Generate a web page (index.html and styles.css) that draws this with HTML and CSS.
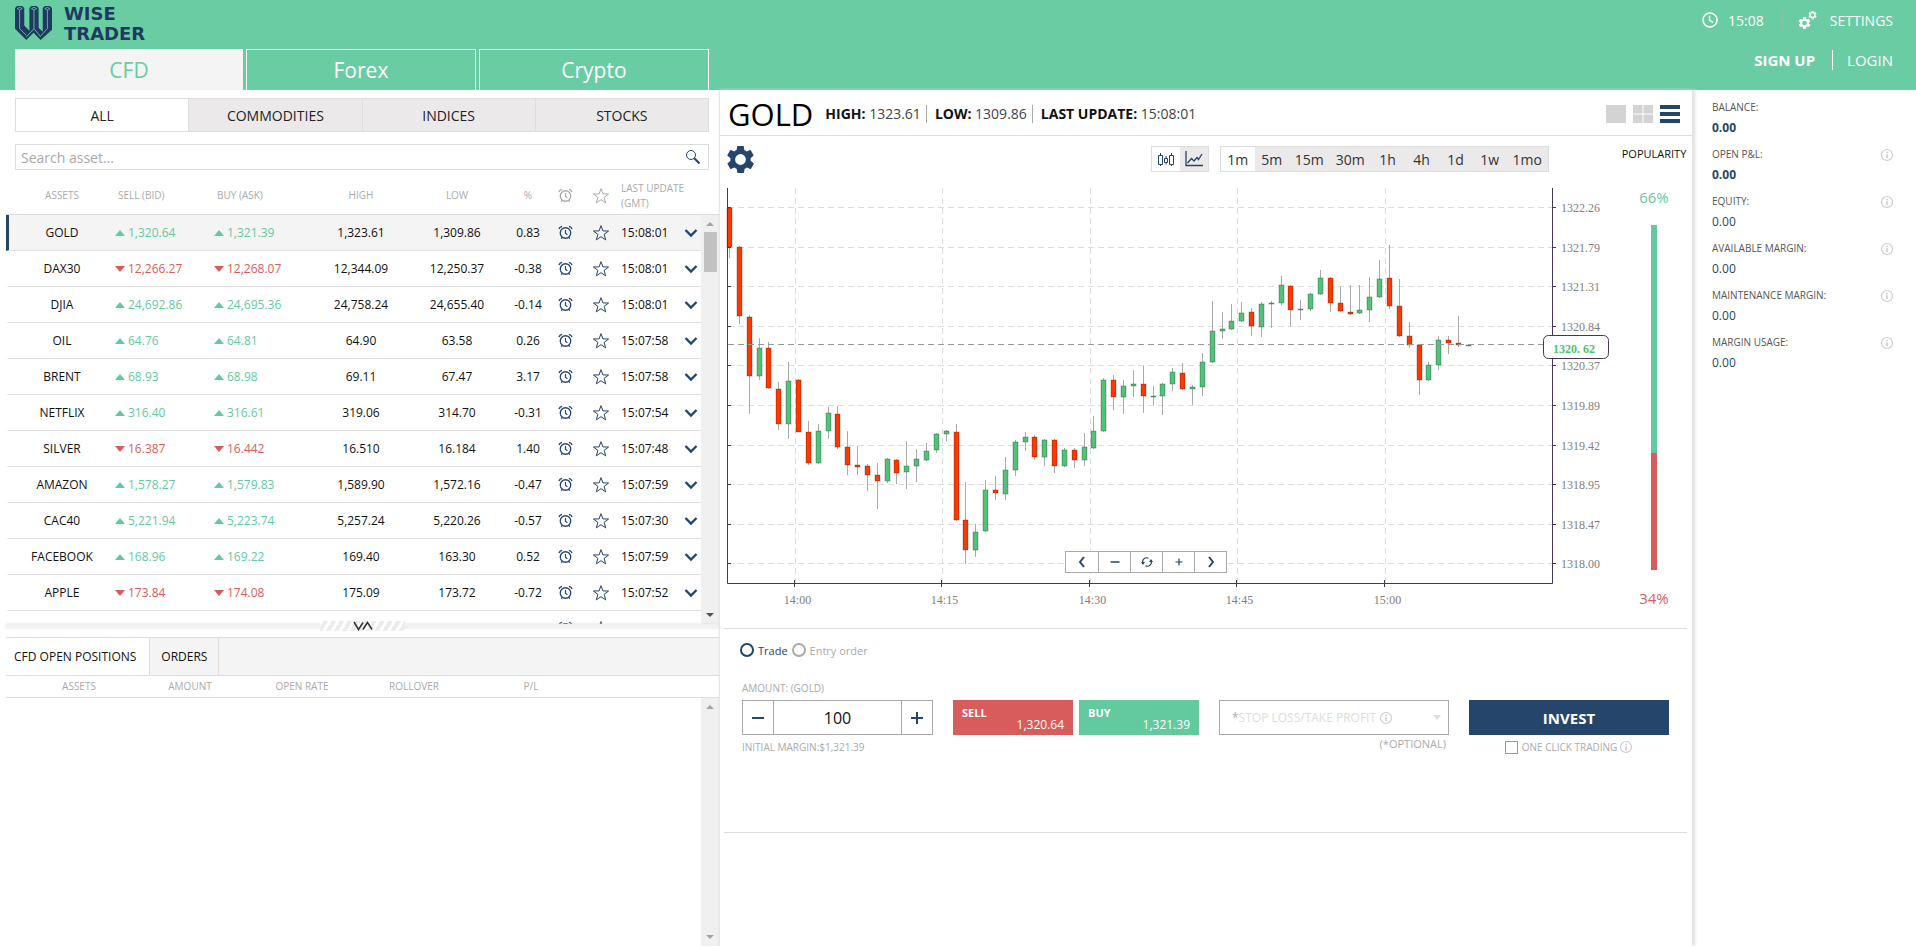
FILE: index.html
```html
<!DOCTYPE html>
<html lang="en">
<head>
    <meta charset="UTF-8">
    <meta name="viewport" content="width=device-width, initial-scale=1.0">
    <title>Wise Trader</title>
    <link rel="stylesheet" href="styles.css">
</head>
<body>

    <!-- Icons -->
    <svg class="sprite" aria-hidden="true">
        <symbol id="icon-alarm" viewBox="0 0 16 16">
            <g fill="none" stroke="currentColor" stroke-width="1.4">
                <circle cx="8" cy="8.5" r="5.6"/>
                <path d="M8 5.2V8.7L10 10.4" stroke-width="1.2"/>
                <path d="M1 4.2Q1.8 1.8 4.4 1.4M15 4.2Q14.2 1.8 11.6 1.4"/>
                <path d="M4.4 13L3.6 14.6M11.6 13L12.4 14.6"/>
            </g>
        </symbol>
        <symbol id="icon-star" viewBox="0 0 18 18">
            <path d="M9 1.6L10.9 6.9L16.6 7L12.1 10.4L13.7 15.9L9 12.7L4.3 15.9L5.9 10.4L1.4 7L7.1 6.9Z" fill="none" stroke="currentColor" stroke-width="1"/>
        </symbol>
        <symbol id="icon-chevron" viewBox="0 0 14 10">
            <path d="M1.5 2L7 7.5L12.5 2" fill="none" stroke="currentColor" stroke-width="2.4"/>
        </symbol>
        <symbol id="icon-info" viewBox="0 0 14 14">
            <circle cx="7" cy="7" r="5.5" fill="none" stroke="currentColor" stroke-width="1.2"/>
            <path d="M7 3.8V5.2M7 6.2V10.2" fill="none" stroke="currentColor" stroke-width="1.6"/>
        </symbol>
        <symbol id="icon-gear" viewBox="0 0 24 24">
            <path fill="currentColor" d="M19.4 13c0-.3.1-.6.1-1s0-.7-.1-1l2.1-1.7c.2-.1.3-.4.1-.6l-2-3.5c-.1-.2-.4-.3-.6-.2l-2.5 1c-.5-.4-1.1-.7-1.7-1L14.5 2.4c0-.2-.2-.4-.5-.4h-4c-.3 0-.5.2-.5.4l-.4 2.6c-.6.2-1.2.6-1.7 1l-2.5-1c-.2-.1-.5 0-.6.2l-2 3.5c-.1.2-.1.5.1.6L4.6 11c0 .3-.1.7-.1 1s0 .7.1 1l-2.1 1.7c-.2.1-.3.4-.1.6l2 3.5c.1.2.4.3.6.2l2.5-1c.5.4 1.1.7 1.7 1l.4 2.6c0 .2.2.4.5.4h4c.3 0 .5-.2.5-.4l.4-2.6c.6-.2 1.2-.6 1.7-1l2.5 1c.2.1.5 0 .6-.2l2-3.5c.1-.2.1-.5-.1-.6L19.4 13zM12 16a4 4 0 1 1 0-8 4 4 0 0 1 0 8z"/>
        </symbol>
    </svg>

    <header class="header">
        <div class="header-left">
            <a class="logo" href="#" aria-label="Wise Trader">
                <svg class="logo-mark" viewBox="0 0 36 33">
                    <path fill="#1f3a5f" d="M0 2L2 0H7L9 2V19L14 24V2L16 0H21L23 2V21L27 25V2L29 0H34L36 2V23L25 33L18 26L11 33L0 22Z"/>
                    <g fill="none" stroke="#69cca3" stroke-width="0.8">
                        <path d="M2 2.5L4.5 1.2L7 2.5L4.5 3.8ZM16 2.5L18.5 1.2L21 2.5L18.5 3.8ZM29 2.5L31.5 1.2L34 2.5L31.5 3.8Z"/>
                        <path d="M4.5 4V22L11 28.5M18.5 4V22L11 30M18.5 22L25 30M31.5 4V22L25 29"/>
                    </g>
                </svg>
                <span class="logo-text">WISE<br>TRADER</span>
            </a>
            <nav class="main-tabs">
                <button class="main-tab active">CFD</button>
                <button class="main-tab">Forex</button>
                <button class="main-tab">Crypto</button>
            </nav>
        </div>
        <div class="header-right">
            <div class="header-row">
                <svg class="icon-clock" viewBox="0 0 16 16"><circle cx="8" cy="8" r="7" fill="none" stroke="#fff" stroke-width="1.6"/><path d="M7.5 3.8V8.3L11 10.3" fill="none" stroke="#fff" stroke-width="1.5"/></svg>
                <span class="time">15:08</span>
                <svg class="icon-gears" viewBox="0 0 18 18"><use href="#icon-gear" x="-1" y="5" width="14" height="14"/><use href="#icon-gear" x="9" y="-1" width="10" height="10"/></svg>
                <a href="#">SETTINGS</a>
            </div>
            <div class="header-row account">
                <a class="signup" href="#">SIGN UP</a>
                <a class="login" href="#">LOGIN</a>
            </div>
        </div>
    </header>

    <main class="layout">
        <!-- Assets -->
        <section class="left">
            <nav class="sub-tabs">
                <button class="active">ALL</button>
                <button>COMMODITIES</button>
                <button>INDICES</button>
                <button>STOCKS</button>
            </nav>
            <form class="search">
                <input type="text" placeholder="Search asset..." aria-label="Search asset">
                <button type="button" aria-label="Search">
                    <svg viewBox="0 0 16 16"><circle cx="6" cy="6" r="4.5" fill="none" stroke="#26456a"/><path d="M9.3 9.3L14.5 14.5" stroke="#26456a" stroke-width="2"/></svg>
                </button>
            </form>

            <div class="assets">
                <div class="assets-view">
                    <table class="assets-table">
                        <colgroup>
                            <col class="w-asset"><col class="w-rate"><col class="w-rate"><col class="w-range"><col class="w-range">
                            <col class="w-change"><col class="w-alarm"><col class="w-star"><col class="w-time"><col class="w-more">
                        </colgroup>
                        <thead>
                            <tr>
                                <th>ASSETS</th>
                                <th class="rate">SELL (BID)</th>
                                <th class="rate">BUY (ASK)</th>
                                <th>HIGH</th>
                                <th>LOW</th>
                                <th>%</th>
                                <th><svg class="alarm"><use href="#icon-alarm"/></svg></th>
                                <th><svg class="star"><use href="#icon-star"/></svg></th>
                                <th class="updated" colspan="2">LAST UPDATE<br>(GMT)</th>
                            </tr>
                        </thead>
                        <tbody id="assets"></tbody>
                    </table>
                </div>
                <div class="scrollbar">
                    <span class="arrow-up"></span>
                    <span class="thumb"></span>
                    <span class="arrow-down dark"></span>
                </div>
            </div>

            <div class="splitter">
                <div class="grip">
                    <svg viewBox="0 0 20 10"><path d="M1 1L5.5 8.5L10 1.5M10 8.5L14.5 1.5L19 8.5" fill="none" stroke="#333" stroke-width="1.5"/></svg>
                </div>
            </div>

            <nav class="position-tabs">
                <button class="active">CFD OPEN POSITIONS</button>
                <button>ORDERS</button>
            </nav>
            <table class="positions-table">
                <colgroup><col class="w-position"><col class="w-detail"><col class="w-detail"><col class="w-detail"><col class="w-profit"><col></colgroup>
                <thead>
                    <tr><th>ASSETS</th><th>AMOUNT</th><th>OPEN RATE</th><th>ROLLOVER</th><th>P/L</th><th></th></tr>
                </thead>
            </table>
            <div class="positions">
                <div class="scrollbar">
                    <span class="arrow-up"></span>
                    <span class="arrow-down"></span>
                </div>
            </div>
        </section>

        <!-- Chart -->
        <section class="middle">
            <div class="title-bar">
                <h1>GOLD</h1>
                <p><b>HIGH:</b> 1323.61</p>
                <p><b>LOW:</b> 1309.86</p>
                <p><b>LAST UPDATE:</b> 15:08:01</p>
                <div class="views">
                    <button aria-label="Single view"><svg viewBox="0 0 20 18"><path fill="#d3d3d3" d="M0 0H20V18H0Z"/></svg></button>
                    <button aria-label="Grid view"><svg viewBox="0 0 20 18"><path fill="#d3d3d3" d="M0 0H9.5V8.5H0ZM10.5 0H20V8.5H10.5ZM0 9.5H9.5V18H0ZM10.5 9.5H20V18H10.5Z"/></svg></button>
                    <button aria-label="List view"><svg viewBox="0 0 20 18"><path fill="#26456a" d="M0 0H20V4H0ZM0 7H20V11H0ZM0 14H20V18H0Z"/></svg></button>
                </div>
            </div>

            <div class="chart-area">
                <div class="chart-column">
                    <div class="toolbar">
                        <button class="chart-settings" aria-label="Chart settings"><svg viewBox="2 2 20 20"><use href="#icon-gear" width="24" height="24"/></svg></button>
                        <div class="switch types">
                            <button class="active" aria-label="Candles"><svg viewBox="0 0 18 16"><g fill="none" stroke="#26456a"><path d="M1.5 4.5H5.5V13.5H1.5ZM3.5 2V4.5M3.5 13.5V15M7.5 7.5H10.5V11.5H7.5ZM9 5V7.5M9 11.5V13.5M12.5 4.5H16.5V13.5H12.5ZM14.5 2V4.5M14.5 13.5V15"/></g></svg></button>
                            <button aria-label="Line"><svg viewBox="0 0 18 16"><path d="M1 0V14.5H18M2.5 12L6.5 7.5L9 10L12 6.5L13.5 8.5L17 3" fill="none" stroke="#26456a" stroke-width="1.3"/></svg></button>
                        </div>
                        <div class="switch">
                            <button class="active">1m</button>
                            <button>5m</button>
                            <button>15m</button>
                            <button>30m</button>
                            <button>1h</button>
                            <button>4h</button>
                            <button>1d</button>
                            <button>1w</button>
                            <button>1mo</button>
                        </div>
                    </div>
                    <div class="chart">
                        <svg id="chart" viewBox="0 0 894 432"></svg>
                        <div class="chart-controls">
                            <button aria-label="Back"><svg viewBox="0 0 12 12"><path d="M8 1L4 6L8 11" fill="none" stroke="#26456a" stroke-width="2"/></svg></button>
                            <button aria-label="Zoom out"><svg viewBox="0 0 12 12"><path d="M1.5 6H10.5" stroke="#26456a" stroke-width="1.5"/></svg></button>
                            <button aria-label="Reset"><svg viewBox="0 0 12 12"><path d="M2 7.5A4 4 0 0 1 7.5 2.3M10 4.5A4 4 0 0 1 4.5 9.7" fill="none" stroke="#26456a" stroke-width="1.2"/><path fill="#26456a" d="M0 6L4 6L2 9ZM12 6L8 6L10 3Z"/></svg></button>
                            <button aria-label="Zoom in"><svg viewBox="0 0 12 12"><path d="M2.5 6H9.5M6 2.5V9.5" stroke="#26456a" stroke-width="1.2"/></svg></button>
                            <button aria-label="Forward"><svg viewBox="0 0 12 12"><path d="M4 1L8 6L4 11" fill="none" stroke="#26456a" stroke-width="2"/></svg></button>
                        </div>
                    </div>
                </div>
                <div class="popularity">
                    <h2>POPULARITY</h2>
                    <span class="buyers">66%</span>
                    <div class="bar"><div style="height: 66%"></div></div>
                    <span class="sellers">34%</span>
                </div>
            </div>

            <form class="ticket">
                <div class="order-type">
                    <label><input type="radio" name="order" checked>Trade</label>
                    <label><input type="radio" name="order">Entry order</label>
                </div>
                <div class="ticket-grid">
                    <label class="amount-label" for="amount">AMOUNT: (GOLD)</label>
                    <div class="amount">
                        <button type="button" aria-label="Less"><svg viewBox="0 0 14 14"><path d="M1 7H13" stroke="#26456a" stroke-width="2"/></svg></button>
                        <input id="amount" type="text" value="100">
                        <button type="button" aria-label="More"><svg viewBox="0 0 14 14"><path d="M1 7H13M7 1V13" stroke="#26456a" stroke-width="2"/></svg></button>
                    </div>
                    <p class="margin-note">INITIAL MARGIN:$1,321.39</p>
                    <div class="sides">
                        <button type="button" class="sell"><b>SELL</b><span>1,320.64</span></button>
                        <button type="button" class="buy"><b>BUY</b><span>1,321.39</span></button>
                    </div>
                    <div class="stop">
                        <span>*</span>
                        <select aria-label="Stop loss or take profit"><option>STOP LOSS/TAKE PROFIT</option></select>
                        <svg class="info"><use href="#icon-info"/></svg>
                        <i></i>
                    </div>
                    <p class="optional">(*OPTIONAL)</p>
                    <button type="button" class="invest">INVEST</button>
                    <label class="one-click"><input type="checkbox">ONE CLICK TRADING<svg class="info"><use href="#icon-info"/></svg></label>
                </div>
            </form>
        </section>

        <!-- Account -->
        <aside class="right">
            <dl id="account"></dl>
        </aside>
    </main>

    <script src="script.js"></script>
</body>
</html>
```

FILE: styles.css
```css
* {
    margin: 0;
    padding: 0;
    box-sizing: border-box;
}
body {
    font-family: "Open Sans", "Liberation Sans", sans-serif;
    font-size: 12px;
    color: #111;
    background: #fff;
}
button, input, select {
    font: inherit;
    color: inherit;
    border: none;
    border-radius: 0;
    background: none;
}
button {
    cursor: pointer;
}
a {
    color: inherit;
    text-decoration: none;
}
svg {
    display: block;
}
.sprite {
    position: absolute;
    width: 0;
    height: 0;
}

/* Header */
.header {
    display: flex;
    justify-content: space-between;
    height: 90px;
    background: #69cca3;
    color: #fff;
}
.header-left {
    display: flex;
    flex-direction: column;
    justify-content: space-between;
    width: 37%;
    padding-left: 15px;
}
.logo {
    display: flex;
    gap: 12px;
    padding-top: 6px;
    color: #1f3a5f;
}
.logo-mark {
    width: 37px;
    height: 34px;
}
.logo-text {
    font: bold 18px/20px "DejaVu Sans", sans-serif;
    height: 34px;
    margin-top: -2px;
}
.main-tabs {
    display: grid;
    grid-template-columns: 228fr 230fr 230fr;
    gap: 3px;
}
.main-tab {
    height: 41px;
    font-size: 21px;
    line-height: 40px;
    border: 1px solid #fff;
    border-bottom: none;
}
.main-tab.active {
    background: #f4f4f4;
    border-color: #f4f4f4;
    color: #69cca3;
}
.header-right {
    padding: 10px 23px 0 0;
}
.header-row {
    display: flex;
    align-items: center;
    justify-content: flex-end;
    height: 20px;
    font-size: 14px;
}
.icon-clock {
    width: 16px;
    height: 16px;
    margin-right: 10px;
}
.time {
    padding-right: 18px;
    border-right: 1px solid #8fbfa6;
}
.icon-gears {
    width: 19px;
    height: 18px;
    margin: 0 13px 0 15px;
}
.account {
    margin-top: 20px;
    font-size: 15px;
}
.signup {
    font-weight: bold;
    padding-right: 17px;
}
.login {
    padding-left: 14px;
    border-left: 1px solid #fff;
}

/* Layout */
.layout {
    display: grid;
    grid-template-columns: 719fr 975fr 222fr;
    min-height: calc(100vh - 92px);
}
.left {
    display: flex;
    flex-direction: column;
    padding-left: 6px;
}
.sub-tabs {
    display: flex;
    margin: 8px 10px 0 9px;
    border: 1px solid #ddd;
}
.sub-tabs button {
    flex: 1;
    height: 32px;
    font-size: 14px;
    color: #222;
    background: #ebe9ea;
}
.sub-tabs button + button {
    border-left: 1px solid #ddd;
}
.sub-tabs .active {
    background: #fff;
}
.search {
    display: flex;
    align-items: center;
    height: 26px;
    margin: 12px 10px 1px 9px;
    padding: 0 7px 0 5px;
    border: 1px solid #ddd;
}
.search input {
    flex: 1;
    font-size: 14px;
    outline: none;
}
.search input::placeholder {
    color: #a9a9a9;
}
.search svg {
    width: 16px;
    height: 16px;
}

/* Asset list */
.assets {
    display: flex;
    height: 453px;
}
.assets-view {
    flex: 1;
    overflow: hidden;
}
.assets-table {
    width: 100%;
    table-layout: fixed;
    border-spacing: 0;
    text-align: center;
}
.w-asset { width: 109px; }
.w-rate { width: 99px; }
.w-range { width: 96px; }
.w-change { width: 46px; }
.w-alarm { width: 29px; }
.w-star { width: 41px; }
.w-time { width: 59px; }
.w-more { width: 21px; }
.assets-table th, .positions-table th {
    font-size: 10px;
    font-weight: normal;
    color: #aaa;
}
.assets-table th {
    height: 44px;
    padding-top: 6px;
    border-bottom: 1px solid #ddd;
    line-height: 15px;
    white-space: nowrap;
}
.assets-table td {
    height: 36px;
    border-bottom: 1px solid #e0e0e0;
    white-space: nowrap;
}
.assets-table td:first-child {
    border-left: 3px solid #fff;
    font-weight: 500;
}
.assets-table th:first-child {
    padding-left: 3px;
}
.assets-table th.rate {
    text-align: left;
    padding-left: 3px;
}
.assets-table .updated {
    text-align: left;
}
.assets-table .selected td {
    background: #f4f4f4;
}
.assets-table .selected td:first-child {
    border-left-color: #26456a;
}
.price {
    text-align: left;
}
.price::before {
    content: "";
    display: inline-block;
    margin-right: 3px;
    vertical-align: 1px;
    border: 5px solid transparent;
}
.up {
    color: #63c99f;
}
.up::before {
    border-top: none;
    border-bottom: 6px solid #63c99f;
}
.down {
    color: #d95c5c;
}
.down::before {
    border-bottom: none;
    border-top: 6px solid #d95c5c;
}
.alarm, .star, .chevron {
    margin: 0 auto;
    color: #26456a;
}
th .alarm, th .star {
    color: #aaa;
}
.alarm {
    width: 15px;
    height: 15px;
}
.star {
    width: 18px;
    height: 18px;
}
.chevron {
    width: 14px;
    height: 10px;
}
.scrollbar {
    display: flex;
    flex-direction: column;
    align-items: center;
    width: 18px;
    padding: 7px 0;
    background: #f0f0f0;
}
.assets .scrollbar {
    margin-top: 43px;
    border-top: 1px solid #ddd;
}
.arrow-up, .arrow-down {
    border: 4px solid transparent;
}
.arrow-up {
    border-top: none;
    border-bottom-color: #a3a3a3;
}
.arrow-down {
    margin-top: auto;
    border-bottom: none;
    border-top-color: #a3a3a3;
}
.arrow-down.dark {
    border-top-color: #505050;
}
.thumb {
    width: 13px;
    height: 40px;
    margin-top: 6px;
    background: #c1c1c1;
}
.splitter {
    height: 4px;
    margin-bottom: 9px;
    background: #f1f1f1;
    box-shadow: 0 0 3px #ddd;
}
.grip {
    position: relative;
    top: -3px;
    width: 85px;
    height: 10px;
    margin: 0 auto;
    background: repeating-linear-gradient(120deg, #fff 0 3px, #ececec 3px 7px);
}
.grip svg {
    width: 20px;
    height: 10px;
    margin: 0 auto;
}

/* Positions */
.position-tabs {
    display: flex;
    height: 39px;
    background: #f4f4f4;
    border: solid #ddd;
    border-width: 1px 0;
}
.position-tabs button {
    padding: 0 11px;
    border-right: 1px solid #ddd;
}
.position-tabs .active {
    padding: 0 13px 0 8px;
    background: #fff;
}
.positions-table {
    width: 100%;
    table-layout: fixed;
    border-spacing: 0;
    border-bottom: 1px solid #ddd;
}
.w-position { width: 128px; }
.w-detail { width: 112px; }
.w-profit { width: 122px; }
.positions-table th {
    height: 21px;
    padding-bottom: 2px;
}
.positions-table th:first-child {
    padding-left: 18px;
}
.positions {
    display: flex;
    justify-content: flex-end;
    flex: 1;
}

/* Title and toolbar */
.middle {
    border-left: 1px solid #e6e6e6;
    border-right: 2px solid #e6e6e6;
    box-shadow: 1px 0 3px #ddd;
}
.title-bar {
    display: flex;
    align-items: center;
    height: 46px;
    padding: 3px 12px 0 8px;
    border-bottom: 1px solid #ddd;
    font-size: 14px;
    color: #444;
}
.title-bar h1 {
    margin-right: 12px;
    font-size: 31px;
    font-weight: 500;
    line-height: 40px;
    color: #000;
}
.title-bar b {
    color: #111;
}
.title-bar p {
    line-height: 18px;
    padding-right: 5px;
}
.title-bar p + p {
    padding-left: 8px;
    border-left: 1px solid #aaa;
}
.views {
    display: flex;
    gap: 7px;
    margin-left: auto;
}
.views svg {
    width: 20px;
    height: 18px;
}
.chart-area {
    display: flex;
    margin: 0 5px 0 4px;
    padding-bottom: 16px;
    border-bottom: 1px solid #ddd;
}
.chart-column {
    flex: 1;
    margin-left: -5px;
}
.toolbar {
    display: flex;
    align-items: center;
    height: 44px;
    padding: 2px 72px 0 8px;
}
.chart-settings {
    margin-right: auto;
    color: #26456a;
}
.chart-settings svg {
    width: 27px;
    height: 27px;
}
.switch {
    display: flex;
    height: 26px;
    border: 1px solid #ddd;
    background: #ebe9ea;
    font-size: 14px;
    color: #333;
}
.switch button {
    min-width: 34px;
    padding: 0 6px;
}
.switch .active {
    background: #fff;
}
.types {
    margin-right: 11px;
}
.types button {
    min-width: 28px;
    padding: 0 5px;
}
.types svg {
    width: 18px;
    height: 16px;
}

/* Chart */
.chart {
    position: relative;
    margin-right: 8px;
}
.chart > svg {
    width: 100%;
    height: auto;
}
.chart text {
    font-family: "Liberation Serif", serif;
    font-size: 12px;
    fill: #808080;
}
.chart .tag-text {
    font-weight: bold;
    fill: #4fbe76;
}
.grid-line {
    stroke: #dcdcdc;
    stroke-dasharray: 6 4;
}
.price-line {
    stroke: #999;
    stroke-dasharray: 6 4;
}
.axis {
    fill: none;
    stroke: #463850;
}
.wick {
    stroke: #aaa;
}
.candle {
    stroke: rgba(0, 0, 0, 0.25);
}
.candle.rise {
    fill: #50c27a;
}
.candle.fall {
    fill: #ff3800;
}
.tag {
    fill: #fff;
    stroke: #463850;
}
.chart-controls {
    position: absolute;
    left: 50%;
    bottom: 39px;
    display: flex;
    margin-left: -101px;
    border: 1px solid #aaa;
    background: #fff;
}
.chart-controls button {
    display: grid;
    place-items: center;
    width: 32px;
    height: 20px;
}
.chart-controls button + button {
    border-left: 1px solid #aaa;
}
.chart-controls svg {
    width: 12px;
    height: 12px;
}
.popularity {
    display: flex;
    flex-direction: column;
    align-items: center;
    width: 66px;
    padding-top: 10px;
    font-size: 15px;
}
.popularity h2 {
    font-size: 11px;
    font-weight: normal;
    line-height: 16px;
    margin-bottom: 25px;
}
.popularity span {
    line-height: 20px;
}
.buyers {
    color: #63c99f;
}
.sellers {
    color: #d95c5c;
}
.bar {
    width: 6px;
    height: 345px;
    margin: 18px 0;
    background: #d95c5c;
}
.bar div {
    background: #63c99f;
}

/* Ticket */
.ticket {
    height: 204px;
    margin: 0 5px 0 4px;
    padding: 10px 18px 0 18px;
    border-bottom: 1px solid #ddd;
}
.order-type {
    display: flex;
    gap: 4px;
    margin-bottom: 20px;
    margin-left: -2px;
    font-size: 11px;
    color: #aaa;
}
.order-type label {
    display: flex;
    align-items: center;
    gap: 4px;
    height: 22px;
}
.order-type label:first-child {
    color: #26456a;
}
.order-type input {
    appearance: none;
    width: 14px;
    height: 14px;
    border: 2px solid currentColor;
    border-radius: 50%;
}
.ticket-grid {
    display: grid;
    grid-template-columns: minmax(0, 191fr) minmax(0, 246fr) minmax(0, 230fr) minmax(0, 200fr);
    grid-template-rows: 14px 35px auto;
    gap: 5px 20px;
    font-size: 10px;
    line-height: 14px;
    color: #aaa;
}
.amount-label {
    grid-area: 1 / 1;
}
.amount {
    grid-area: 2 / 1;
    display: flex;
    border: 1px solid #aaa;
}
.amount button {
    display: grid;
    place-items: center;
    flex: 0 0 30px;
}
.amount svg {
    width: 14px;
    height: 14px;
}
.amount input {
    flex: 1;
    min-width: 0;
    border: solid #aaa;
    border-width: 0 1px;
    font-size: 16px;
    font-weight: 500;
    text-align: center;
    color: #111;
}
.margin-note {
    grid-area: 3 / 1;
}
.sides {
    grid-area: 2 / 2;
    display: flex;
    gap: 6px;
}
.sides button {
    display: flex;
    flex-direction: column;
    align-items: flex-start;
    flex: 1;
    padding: 7px 9px 0;
    color: #fff;
}
.sides b {
    font-size: 11px;
    line-height: 12px;
}
.sides span {
    align-self: flex-end;
    font-size: 12px;
    line-height: 12px;
}
.sell {
    background: #d95c5c;
}
.buy {
    background: #63c99f;
}
.stop {
    grid-area: 2 / 3;
    display: flex;
    align-items: center;
    padding: 0 7px 0 12px;
    border: 1px solid #aaa;
    font-size: 12px;
}
.stop select {
    appearance: none;
    font-weight: 500;
    color: #ddd;
}
.info {
    width: 14px;
    height: 14px;
    margin-left: 2px;
    color: #ccc;
}
.stop i {
    margin-left: auto;
    border: 4px solid transparent;
    border-top: 5px solid #ddd;
    border-bottom: none;
}
.optional {
    grid-area: 3 / 3;
    margin-right: 3px;
    font-size: 11px;
    line-height: 8px;
    font-weight: 500;
    text-align: right;
}
.invest {
    grid-area: 2 / 4;
    background: #26456a;
    color: #fff;
    font-size: 15px;
    font-weight: bold;
}
.one-click {
    grid-area: 3 / 4;
    display: flex;
    align-items: center;
    justify-content: center;
}
.one-click input {
    appearance: none;
    width: 13px;
    height: 13px;
    margin-right: 4px;
    border: 1px solid #999;
}

/* Account */
.right {
    padding: 10px 22px 0 18px;
}
.right dt {
    display: flex;
    justify-content: space-between;
    height: 14px;
    font-size: 10px;
    line-height: 14px;
    color: #555;
}
.right dt svg {
    margin-top: 1px;
}
.right dd {
    margin: 5px 0 10px;
    line-height: 18px;
    color: #26456a;
}
.right dd.bold {
    font-weight: bold;
}
```

FILE: script.js
```js
// asset, direction, sell, buy, high, low, change, time
const assets = [
    ["GOLD", "up", "1,320.64", "1,321.39", "1,323.61", "1,309.86", "0.83", "15:08:01"],
    ["DAX30", "down", "12,266.27", "12,268.07", "12,344.09", "12,250.37", "-0.38", "15:08:01"],
    ["DJIA", "up", "24,692.86", "24,695.36", "24,758.24", "24,655.40", "-0.14", "15:08:01"],
    ["OIL", "up", "64.76", "64.81", "64.90", "63.58", "0.26", "15:07:58"],
    ["BRENT", "up", "68.93", "68.98", "69.11", "67.47", "3.17", "15:07:58"],
    ["NETFLIX", "up", "316.40", "316.61", "319.06", "314.70", "-0.31", "15:07:54"],
    ["SILVER", "down", "16.387", "16.442", "16.510", "16.184", "1.40", "15:07:48"],
    ["AMAZON", "up", "1,578.27", "1,579.83", "1,589.90", "1,572.16", "-0.47", "15:07:59"],
    ["CAC40", "up", "5,221.94", "5,223.74", "5,257.24", "5,220.26", "-0.57", "15:07:30"],
    ["FACEBOOK", "up", "168.96", "169.22", "169.40", "163.30", "0.52", "15:07:59"],
    ["APPLE", "down", "173.84", "174.08", "175.09", "173.72", "-0.72", "15:07:52"],
    ["", "", "", "", "", "", "", ""]
];

document.getElementById("assets").innerHTML = assets.map((a, i) => `
    <tr class="${i === 0 ? "selected" : ""}">
        <td>${a[0]}</td>
        <td class="${a[1] && "price " + a[1]}">${a[2]}</td>
        <td class="${a[1] && "price " + a[1]}">${a[3]}</td>
        <td>${a[4]}</td>
        <td>${a[5]}</td>
        <td>${a[6]}</td>
        <td><svg class="alarm"><use href="#icon-alarm"/></svg></td>
        <td><svg class="star"><use href="#icon-star"/></svg></td>
        <td class="updated">${a[7]}</td>
        <td><svg class="chevron"><use href="#icon-chevron"/></svg></td>
    </tr>`).join("");

// Account summary
const account = ["BALANCE:", "OPEN P&amp;L:", "EQUITY:", "AVAILABLE MARGIN:", "MAINTENANCE MARGIN:", "MARGIN USAGE:"];

document.getElementById("account").innerHTML = account.map((name, i) => `
    <dt>${name}${i > 0 ? '<svg class="info"><use href="#icon-info"/></svg>' : ""}</dt>
    <dd class="${i < 2 ? "bold" : ""}">0.00</dd>`).join("");

// high, open, close, low as chart y positions
const candles = [
    [27, 28, 67, 78], [66, 67, 136, 144], [135, 137, 196, 234], [158, 196, 168, 200], [162, 168, 208, 209],
    [202, 209, 244, 250], [182, 244, 201, 259], [199, 200, 252, 252], [241, 252, 283, 285], [244, 283, 251, 284],
    [227, 251, 233, 259], [226, 234, 267, 269], [251, 267, 285, 295], [266, 285, 287, 295], [284, 286, 295, 311],
    [283, 295, 301, 329], [278, 301, 279, 303], [279, 280, 293, 304], [261, 292, 286, 309], [269, 286, 279, 302],
    [263, 280, 271, 281], [253, 270, 254, 273], [250, 254, 251, 261], [244, 252, 340, 341], [302, 340, 370, 384],
    [344, 370, 352, 377], [300, 351, 310, 352], [296, 310, 313, 320], [277, 314, 290, 320], [260, 290, 262, 296],
    [252, 262, 257, 271], [255, 257, 277, 280], [259, 277, 260, 286], [259, 260, 286, 293], [268, 286, 270, 287],
    [268, 270, 280, 288], [253, 280, 267, 286], [236, 268, 251, 269], [198, 251, 200, 252], [195, 200, 217, 230],
    [200, 217, 206, 234], [190, 206, 204, 217], [186, 204, 216, 233], [206, 217, 216, 225], [203, 216, 204, 235],
    [188, 204, 192, 211], [183, 193, 209, 210], [205, 209, 207, 225], [173, 207, 182, 216], [121, 182, 151, 183],
    [132, 151, 149, 159], [124, 149, 141, 150], [122, 141, 133, 142], [128, 132, 146, 156], [122, 147, 124, 157],
    [121, 124, 123, 148], [96, 123, 105, 125], [105, 106, 130, 146], [120, 130, 129, 140], [113, 129, 114, 131],
    [90, 114, 98, 115], [97, 98, 123, 132], [107, 123, 131, 132], [105, 132, 134, 135], [105, 133, 130, 134],
    [97, 130, 117, 142], [80, 117, 99, 118], [65, 98, 126, 129], [99, 126, 156, 157], [142, 156, 165, 168],
    [164, 165, 200, 215], [182, 200, 185, 201], [156, 185, 160, 190], [156, 160, 163, 174], [136, 163, 165, 167],
    [165, 166, 165, 166]
];
const prices = ["1322.26", "1321.79", "1321.31", "1320.84", "1320.37", "1319.89", "1319.42", "1318.95", "1318.47", "1318.00"];
const times = ["14:00", "14:15", "14:30", "14:45", "15:00"];

function drawChart() {
    let out = "";
    let ticks = "M8.5 8V403.5H833.5V8";
    prices.forEach((p, i) => {
        const y = Math.round(27 + i * 39.6) + 0.5;
        out += `<line class="grid-line" x1="9" y1="${y}" x2="833" y2="${y}"/>`;
        out += `<text x="842" y="${y + 4}">${p}</text>`;
        ticks += `M8 ${y}h4M833 ${y}h4`;
    });
    times.forEach((t, i) => {
        const x = Math.round(75.5 + i * 147.6) + 0.5;
        out += `<line class="grid-line" x1="${x}" y1="8" x2="${x}" y2="403"/>`;
        out += `<text x="${x + 2}" y="424" text-anchor="middle">${t}</text>`;
        ticks += `M${x - 1} 400v7`;
    });
    candles.forEach(([high, open, close, low], i) => {
        const x = Math.round(10 + i * 9.85);
        const type = close < open ? "rise" : "fall";
        out += `<line class="wick" x1="${x + 0.5}" y1="${high}" x2="${x + 0.5}" y2="${low}"/>`;
        out += `<rect class="candle ${type}" x="${x - 2}" y="${Math.min(open, close)}" width="5" height="${Math.abs(open - close)}"/>`;
    });
    out += `<line class="price-line" x1="9" y1="164.5" x2="825" y2="164.5"/>`;
    out += `<path class="axis" d="${ticks}"/>`;
    out += `<rect class="tag" x="824.5" y="155.5" width="65" height="23" rx="5"/>`;
    out += `<text class="tag-text" x="834" y="173">1320. 62</text>`;
    document.getElementById("chart").innerHTML = out;
}
drawChart();
```
